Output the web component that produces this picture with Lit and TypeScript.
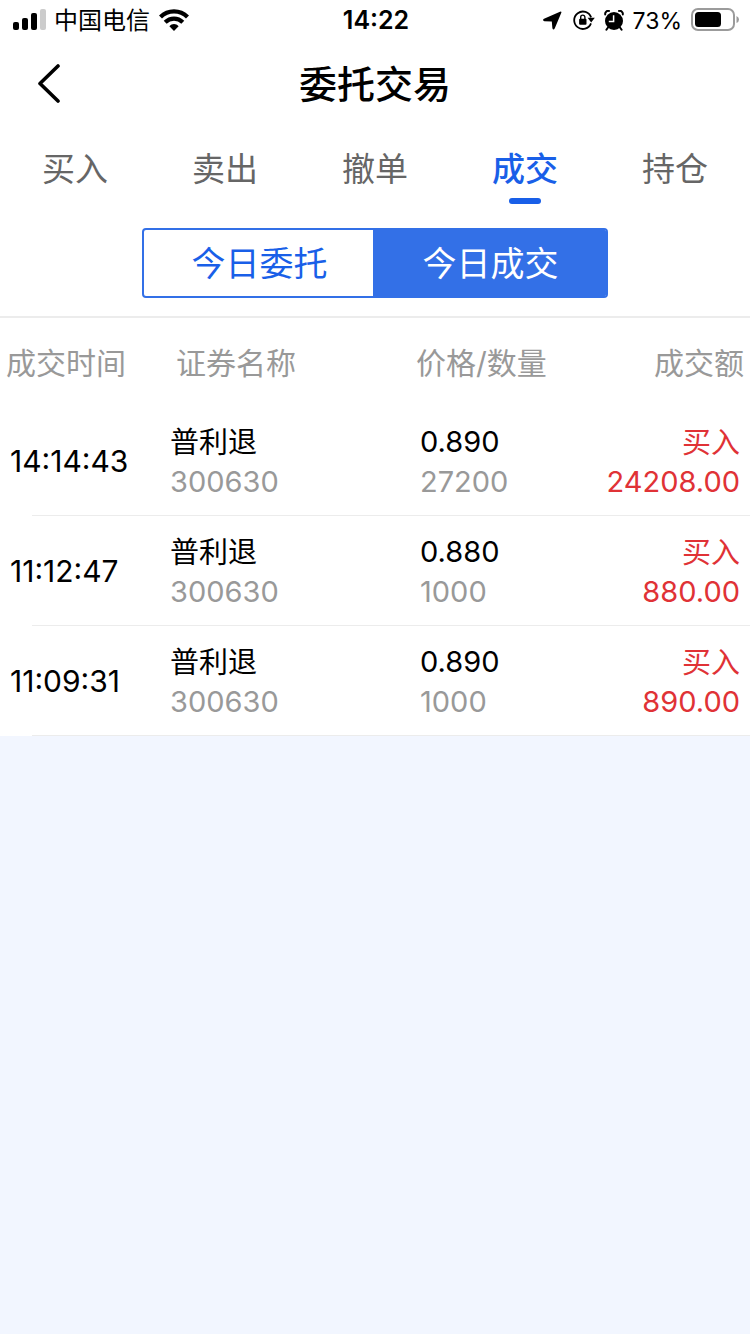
import { LitElement, html, css, svg } from "lit";
import { customElement, state } from "lit/decorators.js";
import { classMap } from "lit/directives/class-map.js";

interface Deal {
  time: string;
  name: string;
  code: string;
  price: string;
  volume: string;
  side: string;
  amount: string;
}

const DEALS: Deal[] = [
  { time: "14:14:43", name: "普利退", code: "300630", price: "0.890", volume: "27200", side: "买入", amount: "24208.00" },
  { time: "11:12:47", name: "普利退", code: "300630", price: "0.880", volume: "1000", side: "买入", amount: "880.00" },
  { time: "11:09:31", name: "普利退", code: "300630", price: "0.890", volume: "1000", side: "买入", amount: "890.00" },
];

@customElement("status-bar")
export class StatusBar extends LitElement {
  static styles = css`
    :host {
      display: grid;
      grid-template-columns: 1fr auto 1fr;
      height: 40px;
      padding: 0 11px 0 13px;
      font-size: 23px;
      line-height: 40px;
      color: #000;
    }
    .side {
      display: flex;
      align-items: center;
      height: 40px;
    }
    .end {
      justify-content: flex-end;
    }
    .carrier {
      margin: 0 9px 0 8px;
      padding-top: 2px;
      font-size: 24px;
    }
    .clock {
      font-size: 25px;
      font-weight: 600;
    }
    .rotation {
      margin: 0 9px 0 11px;
    }
    .charge {
      margin: 0 9px;
      padding-top: 2px;
    }
    svg {
      display: block;
      flex: none;
    }
  `;

  render() {
    return html`
      <div class="side">
        <svg width="33" height="22" viewBox="0 0 33 22" aria-label="信号">
          <rect x="0" y="13" width="6" height="8" rx="2" />
          <rect x="9" y="9" width="6" height="12" rx="2" />
          <rect x="18" y="4" width="6" height="17" rx="2" />
          <rect x="27" y="0" width="6" height="21" rx="2" fill="#ccc" />
        </svg>
        <span class="carrier">中国电信</span>
        <svg width="30" height="22" viewBox="0 0 30 22" aria-label="无线网络">
          <g fill="none" stroke="#000" stroke-width="4.2">
            <path d="M1.5 8 C9 0.4 21 0.4 28.5 8" />
            <path d="M6.2 13.2 C11.2 8.3 18.8 8.3 23.8 13.2" />
          </g>
          <path d="M10.4 17.2 C13 14.4 17 14.4 19.6 17.2 L15 22 Z" />
        </svg>
      </div>
      <span class="clock">14:22</span>
      <div class="side end">
        <svg width="19" height="19" viewBox="0 0 19 19" aria-label="定位">
          <path d="M17 0.8 Q19 0 18.2 1.9 L11.8 17.2 Q10.4 19.6 9.4 17.2 L8.8 10.6 L1.4 10.2 Q-1 9.2 1 7.8 Z" />
        </svg>
        <svg class="rotation" width="22" height="20" viewBox="0 0 22 20" aria-label="方向锁定">
          <path d="M18 13.4 A8.7 8.7 0 1 1 18.1 7.4" fill="none" stroke="#000" stroke-width="1.8" />
          <path d="M14.6 7.8 H21.8 L18.2 12.6 Z" />
          <rect x="6.1" y="8.8" width="7.4" height="6" rx="1" />
          <path d="M7.7 9 V7.2 a2.1 2.1 0 0 1 4.2 0 V9" fill="none" stroke="#000" stroke-width="1.4" />
        </svg>
        <svg width="20" height="21" viewBox="0 0 20 21" aria-label="闹钟">
          <circle cx="10" cy="11" r="9" />
          <path d="M1.2 4.4 A3 3 0 0 1 5 1 M15 1 A3 3 0 0 1 18.8 4.4" fill="none" stroke="#000" stroke-width="2" stroke-linecap="round" />
          <path d="M4 17.5 L2.4 19.8 M16 17.5 L17.6 19.8" fill="none" stroke="#000" stroke-width="2" stroke-linecap="round" />
          <path d="M9.6 5.2 V11.4 H4.8" fill="none" stroke="#fff" stroke-width="1.5" />
        </svg>
        <span class="charge">73%</span>
        <svg width="48" height="24" viewBox="0 0 48 24" aria-label="电量">
          <rect x="1" y="1" width="42" height="21" rx="6" fill="none" stroke="#9b9b9b" stroke-width="2" />
          <rect x="4" y="4" width="26" height="15" rx="3.5" />
          <path d="M45.5 8 Q48 9 48 11.5 Q48 14 45.5 15 Z" fill="#9b9b9b" />
        </svg>
      </div>
    `;
  }
}

@customElement("deal-table")
export class DealTable extends LitElement {
  static styles = css`
    :host {
      display: block;
      background: #fff;
    }
    table {
      width: 100%;
      border-collapse: collapse;
      table-layout: fixed;
      font-size: 30px;
      line-height: 40px;
      text-align: left;
    }
    .col-time {
      width: 160px;
    }
    .col-name {
      width: 250px;
    }
    th {
      box-sizing: border-box;
      height: 88px;
      padding: 2px 6px 0;
      font-weight: 400;
      color: #999;
      white-space: nowrap;
    }
    .name-head {
      padding-left: 16px;
    }
    .row {
      background: linear-gradient(#ececec, #ececec) right bottom / calc(100% - 32px) 1px no-repeat;
    }
    td {
      box-sizing: border-box;
      height: 110px;
      padding: 2px 10px 0;
    }
    .time-cell {
      padding-top: 0;
    }
    .time,
    .line {
      display: block;
      color: #000;
    }
    .line {
      font-size: 29px;
    }
    .cjk {
      line-height: 42px;
      margin-bottom: -2px;
    }
    .muted {
      color: #999;
    }
    .right {
      text-align: right;
    }
    .buy {
      color: #e03236;
    }
  `;

  render() {
    return html`
      <table>
        <colgroup>
          <col class="col-time" />
          <col class="col-name" />
          <col />
          <col />
        </colgroup>
        <thead>
          <tr>
            <th scope="col">成交时间</th>
            <th scope="col" class="name-head">证券名称</th>
            <th scope="col">价格/数量</th>
            <th scope="col" class="right">成交额</th>
          </tr>
        </thead>
        <tbody>
          ${DEALS.map(
            (d) => html`
              <tr class="row">
                <td class="time-cell"><span class="time">${d.time}</span></td>
                <td>
                  <span class="line cjk">${d.name}</span>
                  <span class="line muted">${d.code}</span>
                </td>
                <td>
                  <span class="line">${d.price}</span>
                  <span class="line muted">${d.volume}</span>
                </td>
                <td class="right">
                  <span class="line cjk buy">${d.side}</span>
                  <span class="line buy">${d.amount}</span>
                </td>
              </tr>
            `
          )}
        </tbody>
      </table>
    `;
  }
}

@customElement("app-root")
export class AppRoot extends LitElement {
  static styles = css`
    :host {
      display: block;
      min-height: 100vh;
      background: #f2f6ff;
      font-family: Inter, "Noto Sans CJK SC", sans-serif;
    }
    .top {
      background: #fff;
      border-bottom: 2px solid #ececec;
    }
    button {
      margin: 0;
      padding: 0;
      border: 0;
      background: none;
      font: inherit;
      color: inherit;
      cursor: pointer;
    }
    .title-bar {
      display: grid;
      grid-template-columns: 96px 1fr 96px;
      height: 88px;
    }
    .back {
      display: flex;
      align-items: center;
      height: 86px;
      padding-left: 36px;
    }
    h1 {
      margin: 0;
      font-size: 38px;
      line-height: 88px;
      font-weight: 500;
      text-align: center;
      color: #000;
    }
    .tabs {
      display: grid;
      grid-template-columns: repeat(5, 1fr);
      height: 80px;
    }
    .tab {
      display: flex;
      flex-direction: column;
      align-items: center;
      font-size: 33px;
      line-height: 82px;
      height: 80px;
      color: #666;
    }
    .tab.on {
      font-weight: 500;
      color: #195fe8;
    }
    .tab.on::after {
      content: "";
      width: 32px;
      height: 6px;
      margin-top: -12px;
      border-radius: 3px;
      background: #195fe8;
    }
    .switch {
      display: grid;
      grid-template-columns: 1fr 1fr;
      width: 466px;
      max-width: 90%;
      height: 70px;
      margin: 20px auto 18px;
      box-sizing: border-box;
      border: 2px solid #3370e7;
      border-radius: 4px;
      overflow: hidden;
    }
    .option {
      font-size: 34px;
      line-height: 68px;
      height: 66px;
      color: #195fe8;
    }
    .option.on {
      background: #3370e7;
      box-shadow: 0 0 0 2px #3370e7;
      color: #fff;
    }
  `;

  @state() private tab = "成交";
  @state() private view = "今日成交";

  render() {
    return html`
      <header class="top">
        <status-bar></status-bar>
        <div class="title-bar">
          <button class="back" aria-label="返回">
            <svg width="26" height="40" viewBox="0 0 26 40">
              ${svg`<path d="M22 3 L4 20.5 L22 38" fill="none" stroke="#000" stroke-width="3.6" stroke-linecap="round" stroke-linejoin="round" />`}
            </svg>
          </button>
          <h1>委托交易</h1>
        </div>
        <nav class="tabs">
          ${["买入", "卖出", "撤单", "成交", "持仓"].map(
            (t) => html`<button class=${classMap({ tab: true, on: t === this.tab })} @click=${() => (this.tab = t)}>${t}</button>`
          )}
        </nav>
        <div class="switch">
          ${["今日委托", "今日成交"].map(
            (v) => html`<button class=${classMap({ option: true, on: v === this.view })} @click=${() => (this.view = v)}>${v}</button>`
          )}
        </div>
      </header>
      <deal-table></deal-table>
    `;
  }
}
